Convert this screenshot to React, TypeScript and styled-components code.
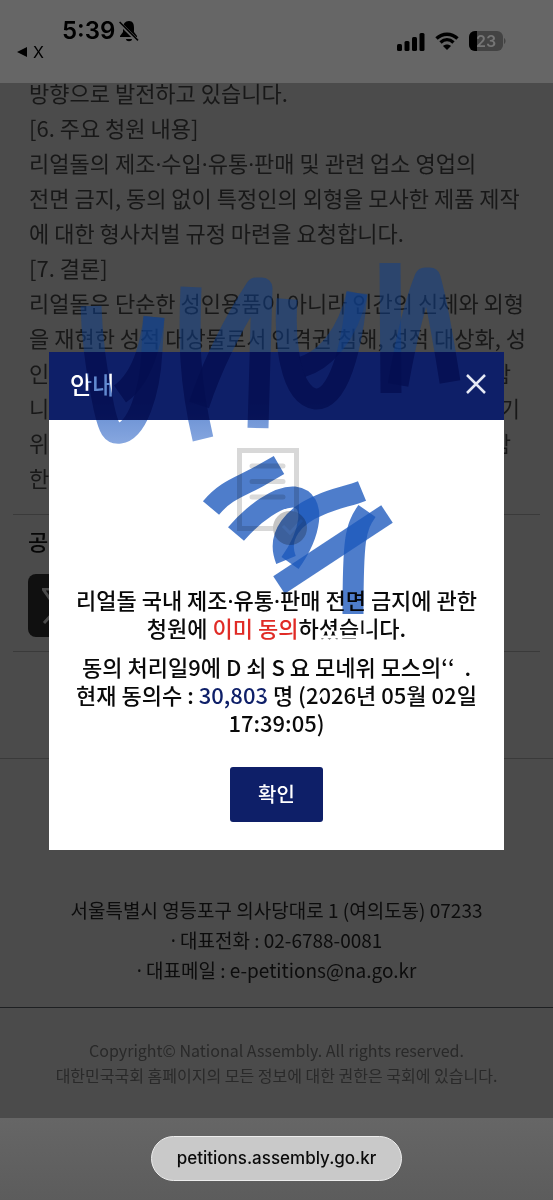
import React from 'react';
import styled, { createGlobalStyle } from 'styled-components';

const kr = `'Noto Sans CJK KR', 'Noto Sans', sans-serif`;
const ui = `Inter, 'Liberation Sans', sans-serif`;

const GlobalStyle = createGlobalStyle`
  * { box-sizing: border-box; }
  body { margin: 0; background: #4b4b4b; font-family: ${kr}; }
  p, h1, h2 { margin: 0; }
`;

const Page = styled.div`
  position: relative;
  display: flex;
  flex-direction: column;
  min-height: 100vh;
`;

const StatusBar = styled.header`
  display: flex;
  justify-content: space-between;
  height: 83px;
  padding: 17px 47px 0 17px;
  background: #666;
  color: #000;
  font-family: ${ui};
`;

const Clock = styled.div`
  display: flex;
  align-items: center;
  gap: 4px;
  padding-left: 45px;
  font-size: 24px;
  line-height: 28px;
  font-weight: 600;
`;

const BackLink = styled.a`
  display: flex;
  align-items: center;
  gap: 6px;
  color: #000;
  font-size: 16px;
  line-height: 14px;
  text-decoration: none;
`;

const Signals = styled.div`
  display: flex;
  align-items: center;
  gap: 10px;
  height: 48px;
`;

const Article = styled.main`
  flex: 1;
  display: flex;
  flex-direction: column;
  overflow: hidden;
  background: #4b4b4b;
`;

const Body = styled.section`
  margin: -8px 29px 0;
  color: #181818;
  font-size: 22px;
  line-height: 35px;
  white-space: nowrap;
`;

const Dot = styled.span`
  font-family: 'Noto Sans', sans-serif;
  line-height: 1;
`;

const SplitLine = styled.p<{ $end?: number }>`
  display: flex;
  justify-content: space-between;
  padding-right: ${(p) => p.$end ?? 13}px;
`;

const Share = styled.section`
  margin: 19px 13px 0;
  padding: 8px 15px 14px;
  border: solid #3a3a3a;
  border-width: 1px 0;
`;

const ShareTitle = styled.h2`
  margin-bottom: 16px;
  color: #060606;
  font-size: 22px;
  line-height: 35px;
  font-weight: 500;
`;

const ShareLink = styled.a`
  display: grid;
  place-items: center;
  width: 63px;
  height: 63px;
  border-radius: 8px;
  background: #101010;
`;

const Contact = styled.address`
  margin-top: 106px;
  padding: 136px 0 22px;
  border-top: 1px solid #3a3a3a;
  border-bottom: 1px solid #1e2022;
  color: #0c0c0c;
  font-size: 19px;
  line-height: 30px;
  font-style: normal;
  text-align: center;
`;

const Copyright = styled.footer`
  padding: 30px 0;
  color: #292929;
  font-size: 16px;
  line-height: 25px;
  text-align: center;
`;

const AddressBar = styled.nav`
  display: flex;
  justify-content: center;
  align-items: center;
  height: 82px;
  padding-bottom: 2px;
  background: linear-gradient(#666, #5c5c5c);
`;

const AddressPill = styled.button`
  height: 45px;
  padding: 0 25px;
  border: 1px solid #ededed;
  border-radius: 23px;
  background: #c9c9c9;
  color: #0a0a0a;
  font: 500 17px ${ui};
`;

const Overlay = styled.div`
  position: absolute;
  inset: 0;
  display: flex;
  align-items: center;
  padding: 2px 49px 0;
`;

const Dialog = styled.div`
  position: relative;
  flex: 1;
  background: #fff;
`;

const DialogHeader = styled.div`
  display: flex;
  align-items: center;
  justify-content: space-between;
  height: 68px;
  padding: 0 17px 4px 21px;
  background: #0e1f68;
`;

const DialogTitle = styled.h1`
  color: #fff;
  font-size: 24px;
  line-height: 32px;
  font-weight: 500;
`;

const CloseButton = styled.button`
  display: flex;
  padding: 0;
  border: 0;
  background: none;
`;

const DialogBody = styled.div`
  display: flex;
  flex-direction: column;
  align-items: center;
  padding: 28px 0;
`;

const Message = styled.p<{ $top: number }>`
  margin-top: ${(p) => p.$top}px;
  color: #0a0a0a;
  font-size: 22px;
  line-height: 28px;
  font-weight: 500;
  text-align: center;
  white-space: nowrap;
`;

const Mark = styled.span<{ $color: string }>`
  color: ${(p) => p.$color};
`;

const ConfirmButton = styled.button`
  width: 93px;
  height: 55px;
  margin-top: 31px;
  padding: 0 0 3px;
  border: 0;
  border-radius: 3px;
  background: #0e1f68;
  color: #fff;
  font: 500 20px ${kr};
`;

const Scribble = styled.svg<{ $multiply?: boolean }>`
  position: absolute;
  left: -49px;
  top: -102px;
  pointer-events: none;
  mix-blend-mode: ${(p) => (p.$multiply ? 'multiply' : 'normal')};
`;

const upperStrokes = [
  'M91 306 C92 340 97 375 104 408 C109 430 112 434 120 433 C136 431 150 395 152 350 L154 317',
  'M120 394 C140 380 150 350 154 317',
  'M191 287 C189 340 189 380 203 439',
  'M199 405 C212 365 235 320 256 288 L262 288 L258 428',
  'M287 299 C284 340 290 395 315 399 C338 401 352 350 357 293',
  'M302 367 C325 360 348 335 357 293',
  'M390 263 L391 393',
  'M398 385 C406 340 414 305 425 278 L430 278 C438 305 444 345 450 382',
];

const lowerStrokes = [
  'M211 508 C226 490 240 487 258 477 L279 465',
  'M236 534 C254 513 278 496 294 497 C318 500 310 535 290 563',
  'M286 560 C276 535 295 515 320 505 C335 498 350 496 362 491',
  'M279 585 L387 514',
  'M367 511 C355 528 353 540 353 614',
];

const smudges = [
  'M322 637h16',
  'M341 637h14',
  'M365 621v16',
  'M269 689l-4 6',
  'M281 693v6',
  'M318 699l5-6',
];

function BellOff() {
  return (
    <svg width="20" height="22" viewBox="0 0 20 22" aria-hidden="true">
      <path d="M10 1C6 1 4 4 4 8v4L1 16v1h17v-1l-3-4V8c0-4-1-7-5-7zM7 19h6c0 3-6 3-6 0z" fill="#000" />
      <path d="M0 2.6 18.6 20.8" stroke="#666" strokeWidth="3.6" />
      <path d="M.6 2 19 20.4" stroke="#000" strokeWidth="1.5" />
    </svg>
  );
}

function DocumentIcon() {
  return (
    <svg width="79" height="97" viewBox="237 448 79 97" aria-hidden="true">
      <rect x="239.5" y="450.5" width="57" height="78" fill="none" stroke="#d8d8d8" strokeWidth="5" />
      <path d="M252 466h31M252 481.5h31M252 497h31" stroke="#dadada" strokeWidth="5" strokeLinecap="round" />
      <circle cx="290" cy="528" r="17" fill="#c4c4c4" />
      <path d="M283 526l7 7 12-13" fill="none" stroke="#d4d4d4" strokeWidth="3" />
    </svg>
  );
}

export default function App() {
  return (
    <>
      <GlobalStyle />
      <Page>
        <StatusBar>
          <div>
            <Clock>5:39 <BellOff /></Clock>
            <BackLink href="#back">
              <svg width="10" height="10" viewBox="0 0 10 10" aria-hidden="true"><path d="M0 5 10 0v10z" /></svg>
              X
            </BackLink>
          </div>
          <Signals>
            <svg width="28" height="19" viewBox="0 0 28 19" aria-hidden="true">
              <rect x="0" y="12" width="5" height="7" rx="1.5" />
              <rect x="7.5" y="9" width="5" height="10" rx="1.5" />
              <rect x="15" y="5" width="5" height="14" rx="1.5" />
              <rect x="22.5" y="1" width="5" height="18" rx="1.5" />
            </svg>
            <svg width="24" height="19" viewBox="0 0 24 19" aria-hidden="true">
              <path d="M1.5 6.5C7.5.8 16.5.8 22.5 6.5M5.500 10.5c4-3.600 9-3.600 13 0" fill="none" stroke="#000" strokeWidth="3.4" />
              <path d="M12 18l-4-4c2.300-2 5.700-2 8 0z" />
            </svg>
            <svg width="37" height="20" viewBox="0 0 37 20" aria-hidden="true">
              <path d="M6 0h22a6 6 0 0 1 6 6v8a6 6 0 0 1-6 6H6a6 6 0 0 1-6-6V6a6 6 0 0 1 6-6z" fill="#434343" />
              <path d="M6 0h2v20H6a6 6 0 0 1-6-6V6a6 6 0 0 1 6-6z" fill="#000" />
              <path d="M35 7c2 1 2 5 0 6z" fill="#434343" />
              <text x="17" y="16" textAnchor="middle" fontFamily="Inter" fontSize="16" fontWeight="600" fill="#757575">23</text>
            </svg>
          </Signals>
        </StatusBar>

        <Article>
          <Body>
            <p>방향으로 발전하고 있습니다.</p>
            <p>[6. 주요 청원 내용]</p>
            <p>리얼돌의 제조<Dot>·</Dot>수입<Dot>·</Dot>유통<Dot>·</Dot>판매 및 관련 업소 영업의</p>
            <p>전면 금지, 동의 없이 특정인의 외형을 모사한 제품 제작</p>
            <p>에 대한 형사처벌 규정 마련을 요청합니다.</p>
            <p>[7. 결론]</p>
            <p>리얼돌은 단순한 성인용품이 아니라 인간의 신체와 외형</p>
            <p>을 재현한 성적 대상물로서 인격권 침해, 성적 대상화, 성</p>
            <SplitLine><span>인</span><span>함</span></SplitLine>
            <SplitLine $end={4}><span>니</span><span>기</span></SplitLine>
            <SplitLine><span>위</span><span>함</span></SplitLine>
            <p>한</p>
          </Body>
          <Share>
            <ShareTitle>공유</ShareTitle>
            <ShareLink href="#x" aria-label="X">
              <svg width="36" height="36" viewBox="0 0 36 36" aria-hidden="true">
                <path d="M1 1h10l24 34H25zM33 1 2 35" fill="none" stroke="#4b4b4b" strokeWidth="3" />
              </svg>
            </ShareLink>
          </Share>
          <Contact>
            <p>서울특별시 영등포구 의사당대로 1 (여의도동) 07233</p>
            <p><Dot>·</Dot> 대표전화 : 02-6788-0081</p>
            <p><Dot>·</Dot> 대표메일 : e-petitions@na.go.kr</p>
          </Contact>
          <Copyright>
            <p>Copyright© National Assembly. All rights reserved.</p>
            <p>대한민국국회 홈페이지의 모든 정보에 대한 권한은 국회에 있습니다.</p>
          </Copyright>
        </Article>

        <AddressBar>
          <AddressPill type="button">petitions.assembly.go.kr</AddressPill>
        </AddressBar>

        <Overlay>
          <Dialog role="dialog" aria-modal="true" aria-labelledby="notice-title">
            <DialogHeader>
              <DialogTitle id="notice-title">안내</DialogTitle>
              <CloseButton type="button" aria-label="닫기">
                <svg width="22" height="22" viewBox="0 0 22 22" aria-hidden="true">
                  <path d="M2 2l18 18M20 2 2 20" stroke="#e6e9f5" strokeWidth="2.5" />
                </svg>
              </CloseButton>
            </DialogHeader>
            <DialogBody>
              <DocumentIcon />
              <Message $top={40}>
                리얼돌 국내 제조<Dot>·</Dot>유통<Dot>·</Dot>판매 전면 금지에 관한<br />
                청원에 <Mark $color="#e02b26">이미 동의</Mark>하셨습니다.
              </Message>
              <Message $top={11}>
                동의 처리일9에 D 쇠 S 요 모네위 모스의‘‘{'\u00a0\u00a0'}.<br />
                현재 동의수 : <Mark $color="#0e1f68">30,803</Mark> 명 (2026년 05월 02일<br />
                17:39:05)
              </Message>
              <ConfirmButton type="button">확인</ConfirmButton>
            </DialogBody>
            <Scribble width="553" height="102" viewBox="0 250 553 102" aria-hidden="true">
              <g fill="none" stroke="#0f3f8c" strokeOpacity=".52" strokeWidth="21" strokeLinejoin="round">
                {upperStrokes.map((d) => <path key={d} d={d} />)}
              </g>
            </Scribble>
            <Scribble $multiply width="553" height="400" viewBox="0 250 553 400" aria-hidden="true">
              <defs>
                <clipPath id="dialog-area"><rect x="49" y="352" width="455" height="298" /></clipPath>
                <linearGradient id="ink" gradientUnits="userSpaceOnUse" x1="0" y1="400" x2="0" y2="445">
                  <stop offset="0" stopColor="#3a6cc4" />
                  <stop offset="1" stopColor="#6a92d8" />
                </linearGradient>
              </defs>
              <g clipPath="url(#dialog-area)" fill="none" strokeWidth="21" strokeLinejoin="round">
                {upperStrokes.map((d) => <path key={d} d={d} stroke="url(#ink)" strokeOpacity=".8" />)}
                {lowerStrokes.map((d) => <path key={d} d={d} stroke="#1c58bd" strokeOpacity=".78" />)}
              </g>
            </Scribble>
            <Scribble width="553" height="500" viewBox="0 250 553 500" aria-hidden="true">
              <g fill="none" stroke="#fff" strokeWidth="3" strokeLinecap="round">
                {smudges.map((d) => <path key={d} d={d} />)}
              </g>
            </Scribble>
          </Dialog>
        </Overlay>
      </Page>
    </>
  );
}
